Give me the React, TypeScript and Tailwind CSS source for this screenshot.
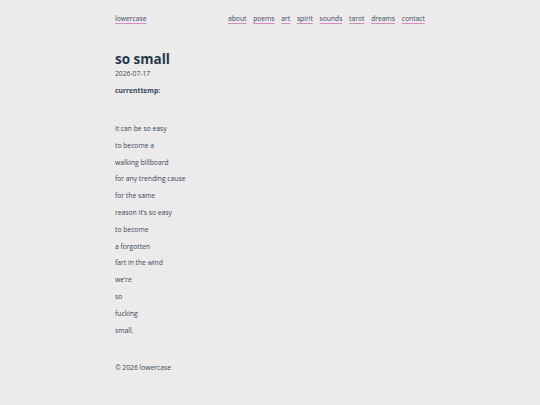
export default function App() {
  const lines = [
    "it can be so easy",
    "to become a",
    "walking billboard",
    "for any trending cause",
    "for the same",
    "reason it’s so easy",
    "to become",
    "a forgotten",
    "fart in the wind",
    "we’re",
    "so",
    "fucking",
    "small.",
  ];
  const nav = ["about", "poems", "art", "spirit", "sounds", "tarot", "dreams", "contact"];
  const link = "underline decoration-[#d98bc4] underline-offset-2 text-[#3a4a5c]";
  return (
    <div className="min-h-[405px] bg-[#edeaeb] text-[#34495a]" style={{ fontFamily: '"Open Sans", "Noto Sans", sans-serif' }}>
      <div className="mx-auto w-[310px] pt-[14px] text-[6.75px] leading-[10px]">
        <header className="flex justify-between">
          <a className={link}>lowercase</a>
          <nav className="flex gap-[6.7px]">
            {nav.map((n) => (
              <a key={n} className={link}>{n}</a>
            ))}
          </nav>
        </header>
        <h1 className="mt-[26.5px] text-[13.5px] font-bold leading-[17px] text-[#1e3a4c]">so small</h1>
        <div className="mt-[1.5px]">2026-07-17</div>
        <div className="mt-[7px] font-bold">currenttemp:</div>
        <div className="mt-[28px] flex flex-col gap-[6.8px]">
          {lines.map((l) => (
            <p key={l}>{l}</p>
          ))}
        </div>
        <footer className="mt-[27px]">© 2026 lowercase</footer>
      </div>
    </div>
  );
}
